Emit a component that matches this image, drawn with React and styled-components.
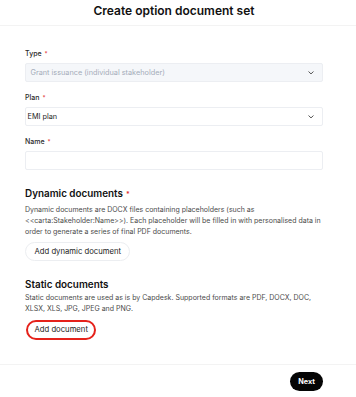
import React from "react";
import styled, { createGlobalStyle } from "styled-components";

const Global = createGlobalStyle`
  html, body { margin: 0; padding: 0; background: #fff; }
  body { font-family: Inter, "Noto Sans", sans-serif; color: #111; }
  * { box-sizing: border-box; }
`;

const Page = styled.div`
  width: 356px;
  height: 397px;
  display: flex;
  flex-direction: column;
  background: #fff;
`;

const Header = styled.header`
  height: 26px;
  flex: none;
  border-bottom: 1px solid #f3f3f3;
  display: flex;
  justify-content: center;
  align-items: flex-start;
`;

const Title = styled.h1`
  margin: 4px 8px 0 0;
  font-size: 12px;
  font-weight: 600;
  line-height: 14px;
  color: #111;
`;

const Body = styled.main`
  flex: 1;
  padding: 24px 33px 0 25px;
  display: flex;
  flex-direction: column;
`;

const Field = styled.div`
  display: flex;
  flex-direction: column;
  margin-bottom: ${(p) => p.$mb || 0}px;
`;

const Label = styled.label`
  font-size: 7px;
  font-weight: 500;
  line-height: 8px;
  height: 8px;
  color: #2a2a2a;
  margin-bottom: 5px;
`;

const Req = styled.span`
  color: #e0282e;
  margin-left: ${(p) => p.$gap || 3}px;
  font-size: ${(p) => p.$size || 6}px;
`;

const Box = styled.div`
  height: 19px;
  border: 1px solid #eceef2;
  border-radius: 2px;
  background: ${(p) => (p.$disabled ? "#f5f7fa" : "#fff")};
  display: flex;
  align-items: center;
  justify-content: space-between;
  padding: 0 8px 0 ${(p) => (p.$flush ? 1.5 : 4.5)}px;
  font-size: 7.3px;
  color: ${(p) => (p.$disabled ? "#a4acb9" : "#1c1c1c")};
`;

const Chevron = () => (
  <svg width="6" height="4" viewBox="0 0 6 4" fill="none">
    <path d="M0.8 0.8 L3 2.9 L5.2 0.8" stroke="#555" strokeWidth="1" strokeLinecap="round" strokeLinejoin="round" />
  </svg>
);

const SectionTitle = styled.h2`
  margin: ${(p) => p.$mt || 0}px 0 0;
  font-size: 9.9px;
  font-weight: 600;
  line-height: 12px;
  color: #111;
`;

const Desc = styled.p`
  margin: ${(p) => p.$mt || 2.5}px 0 0;
  font-size: 7px;
  line-height: 11px;
  color: #4a4a4a;
`;

const PillButton = styled.button`
  align-self: flex-start;
  height: ${(p) => (p.$highlight ? 20 : 19)}px;
  padding: 0 ${(p) => (p.$highlight ? 6.5 : 8.5)}px;
  border-radius: 10px;
  background: #fff;
  border: ${(p) => (p.$highlight ? "2px solid #e5221b" : "1px solid #eceef1")};
  font-family: Inter, "Noto Sans", sans-serif;
  font-size: 7.7px;
  line-height: 1;
  color: #222;
  cursor: pointer;
  margin: ${(p) => p.$mt || 0}px 0 0 ${(p) => p.$ml || 0}px;
`;

const Footer = styled.footer`
  height: 33px;
  flex: none;
  border-top: 1px solid #f3f3f3;
  display: flex;
  justify-content: flex-end;
  align-items: flex-start;
  padding: 7px 33px 0 0;
`;

const NextButton = styled.button`
  height: 19px;
  padding: 0 8px;
  border-radius: 10px;
  border: none;
  background: #050505;
  color: #fff;
  font-family: Inter, "Noto Sans", sans-serif;
  font-size: 7.3px;
  font-weight: 700;
  line-height: 1;
  cursor: pointer;
`;

export default function App() {
  return (
    <>
      <Global />
      <Page>
        <Header>
          <Title>Create option document set</Title>
        </Header>
        <Body>
          <Field $mb={12}>
            <Label>Type<Req>*</Req></Label>
            <Box $disabled>
              <span>Grant issuance (individual stakeholder)</span>
              <Chevron />
            </Box>
          </Field>
          <Field $mb={12}>
            <Label>Plan<Req>*</Req></Label>
            <Box $flush>
              <span>EMI plan</span>
              <Chevron />
            </Box>
          </Field>
          <Field $mb={17}>
            <Label>Name<Req>*</Req></Label>
            <Box />
          </Field>
          <SectionTitle>Dynamic documents<Req $gap={3} $size={7}>*</Req></SectionTitle>
          <Desc>
            Dynamic documents are DOCX files containing placeholders (such as
            &lt;&lt;carta:Stakeholder:Name&gt;&gt;). Each placeholder will be filled in with personalised data in
            order to generate a series of final PDF documents.
          </Desc>
          <PillButton $mt={5.5}>Add dynamic document</PillButton>
          <SectionTitle $mt={16.5}>Static documents</SectionTitle>
          <Desc $mt={2}>
            Static documents are used as is by Capdesk. Supported formats are PDF, DOCX, DOC,
            XLSX, XLS, JPG, JPEG and PNG.
          </Desc>
          <PillButton $highlight $mt={6.5} $ml={1}>Add document</PillButton>
        </Body>
        <Footer>
          <NextButton>Next</NextButton>
        </Footer>
      </Page>
    </>
  );
}
